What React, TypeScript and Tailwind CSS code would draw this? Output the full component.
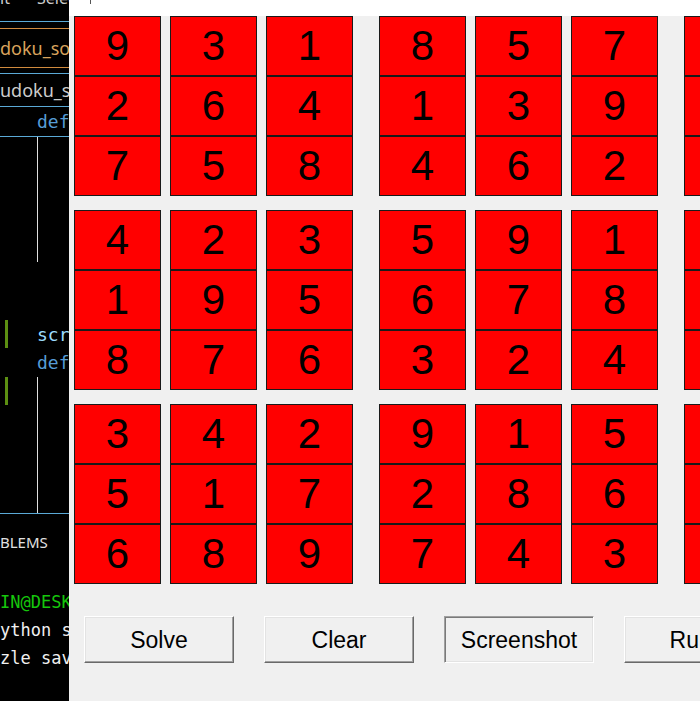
import React from "react";

const rows: number[][] = [
  [9, 3, 1, 8, 5, 7, 4, 2, 6],
  [2, 6, 4, 1, 3, 9, 8, 7, 5],
  [7, 5, 8, 4, 6, 2, 3, 9, 1],
  [4, 2, 3, 5, 9, 1, 7, 8, 6],
  [1, 9, 5, 6, 7, 8, 2, 4, 3],
  [8, 7, 6, 3, 2, 4, 9, 1, 5],
  [3, 4, 2, 9, 1, 5, 6, 7, 8],
  [5, 1, 7, 2, 8, 6, 4, 3, 9],
  [6, 8, 9, 7, 4, 3, 1, 5, 2],
];

function Cell({ v }: { v: number }) {
  return (
    <div className="w-[87px] h-[60px] shrink-0 bg-[#ff0000] border border-[#1a1a1a] flex items-center justify-center text-[42px] leading-none text-black font-['Liberation_Sans',Arial,sans-serif]">
      {v}
    </div>
  );
}

function Box({ br, bc }: { br: number; bc: number }) {
  return (
    <div className="flex gap-[9px] shrink-0">
      {[0, 1, 2].map((c) => (
        <div key={c} className="flex flex-col shrink-0">
          {[0, 1, 2].map((r) => (
            <Cell key={r} v={rows[br * 3 + r][bc * 3 + c]} />
          ))}
        </div>
      ))}
    </div>
  );
}

function Btn({ label, sunken }: { label: string; sunken?: boolean }) {
  const cls = sunken
    ? "border border-t-[#a0a0a0] border-l-[#a0a0a0] border-r-white border-b-white shadow-[inset_1px_1px_0_#7a7a7a,inset_-1px_-1px_0_#e3e3e3]"
    : "border border-t-white border-l-white border-r-[#696969] border-b-[#696969] shadow-[inset_-1px_-1px_0_#a0a0a0,inset_1px_1px_0_#e3e3e3]";
  return (
    <div
      className={
        "w-[150px] h-[47px] shrink-0 bg-[#f0f0f0] flex items-center justify-center pt-[2px] text-[23px] text-black font-['Liberation_Sans',Arial,sans-serif] whitespace-nowrap " +
        cls
      }
    >
      {label}
    </div>
  );
}

function Blue() {
  return <div className="h-px shrink-0 bg-[#5aa9d6]" />;
}
function Orange() {
  return <div className="h-px shrink-0 bg-[#d18b3e]" />;
}

function LeftPanel() {
  return (
    <div className="w-[69px] shrink-0 h-[701px] bg-black overflow-hidden flex flex-col font-['Noto_Sans',sans-serif] whitespace-nowrap">
      <div className="h-[21px] shrink-0 overflow-hidden">
        <div className="flex text-[16px] leading-[16px] text-[#cccccc] -mt-[10px]">
          <span className="w-[37px] shrink-0">it</span>
          <span>Selection</span>
        </div>
      </div>
      <Blue />
      <div className="h-[6px] shrink-0" />
      <Orange />
      <div className="h-[38px] shrink-0 flex items-center text-[18px] text-[#d9a35c]">
        doku_solver.py
      </div>
      <Orange />
      <div className="h-[5px] shrink-0" />
      <Blue />
      <div className="h-[32px] shrink-0 flex items-center text-[18px] text-[#cccccc]">
        udoku_solver.py
      </div>
      <Blue />
      <div className="h-[29px] shrink-0 flex items-center pl-[37px] text-[18px] text-[#569cd6] font-['DejaVu_Sans_Mono',monospace]">
        def solve(self):
      </div>
      <Blue />
      <div className="h-[125px] shrink-0 ml-[37px] border-l border-[#e0e0e0]" />
      <div className="h-[58px] shrink-0" />
      <div className="h-[28px] shrink-0 flex items-center">
        <div className="ml-[5px] w-[3px] h-full bg-[#5c8f12] shrink-0" />
        <span className="ml-[29px] text-[18px] text-[#9cdcfe] font-['DejaVu_Sans_Mono',monospace]">
          screenshot_btn
        </span>
      </div>
      <div className="h-[29px] shrink-0 flex items-center pl-[37px] text-[18px] text-[#569cd6] font-['DejaVu_Sans_Mono',monospace]">
        def take_screenshot(self):
      </div>
      <div className="h-[136px] shrink-0 flex">
        <div className="ml-[5px] w-[3px] h-[28px] bg-[#5c8f12] shrink-0" />
        <div className="ml-[29px] h-full border-l border-[#e0e0e0]" />
      </div>
      <Blue />
      <div className="h-[56px] shrink-0 flex items-center text-[15px] text-[#e0e0e0]">
        <span>BLEMS</span>
        <span className="ml-[40px]">OUTPUT</span>
      </div>
      <div className="h-[19px] shrink-0" />
      <div className="h-[28px] shrink-0 flex items-center text-[17px] text-[#16c60c] font-['DejaVu_Sans_Mono',monospace]">
        IN@DESKTOP
      </div>
      <div className="h-[28px] shrink-0 flex items-center text-[17px] text-[#f0f0f0] font-['DejaVu_Sans_Mono',monospace]">
        ython sudoku_solver.py
      </div>
      <div className="h-[28px] shrink-0 flex items-center text-[17px] text-[#f0f0f0] font-['DejaVu_Sans_Mono',monospace]">
        zle saved
      </div>
    </div>
  );
}

export default function App() {
  return (
    <div className="w-[700px] h-[701px] flex overflow-hidden bg-[#f0f0f0]">
      <LeftPanel />
      <div className="flex-1 min-w-0 h-[701px] flex flex-col overflow-hidden bg-[#f0f0f0]">
        <div className="h-[16px] shrink-0 bg-white pl-[21px]">
          <div className="w-px h-[4px] bg-[#555555]" />
        </div>
        <div className="flex flex-col gap-[14px] pl-[5px]">
          {[0, 1, 2].map((br) => (
            <div key={br} className="flex gap-[26px]">
              {[0, 1, 2].map((bc) => (
                <Box key={bc} br={br} bc={bc} />
              ))}
            </div>
          ))}
        </div>
        <div className="flex gap-[30px] pl-[15px] mt-[32px]">
          <Btn label="Solve" />
          <Btn label="Clear" />
          <Btn label="Screenshot" sunken />
          <Btn label="Rules" />
        </div>
      </div>
    </div>
  );
}
